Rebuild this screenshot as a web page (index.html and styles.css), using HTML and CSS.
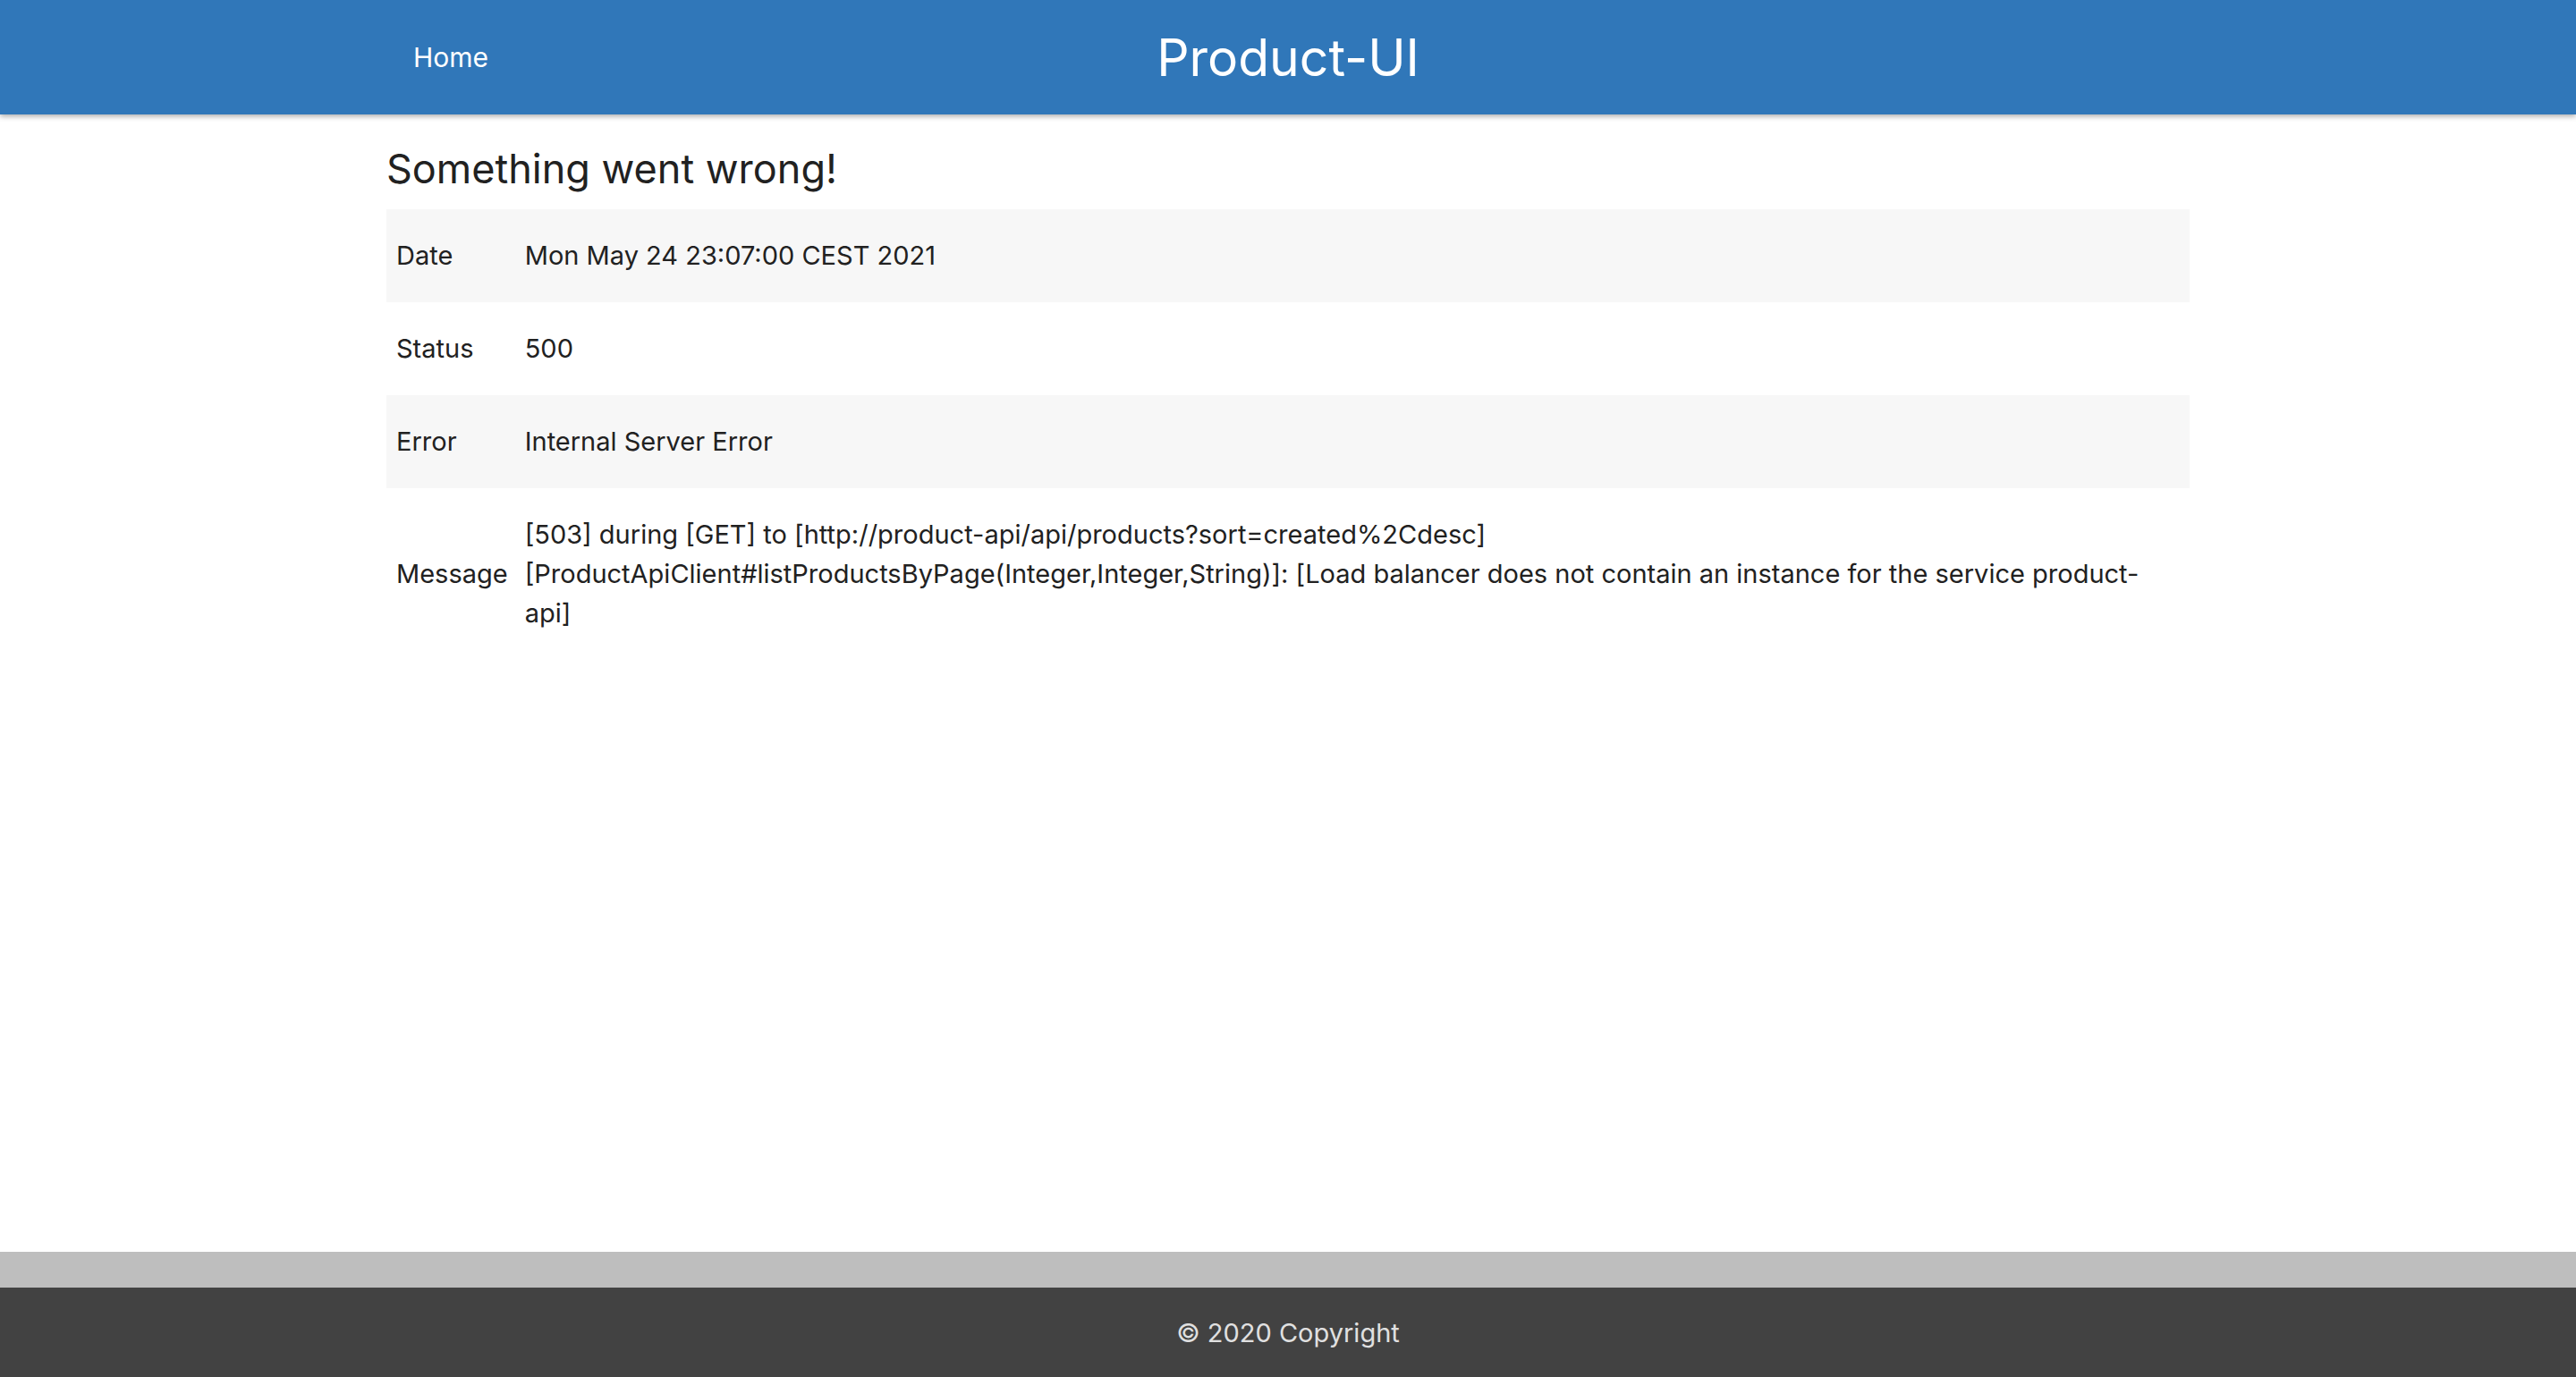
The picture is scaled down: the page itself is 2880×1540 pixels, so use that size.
FILE: index.html
```html
<!DOCTYPE html>
<html lang="en">
<head>
<meta charset="utf-8">
<title>Product-UI</title>
<link rel="stylesheet" href="styles.css">
</head>
<body>
<div class="page">
  <header class="navbar">
    <div class="navbar-inner">
      <a class="nav-link" href="#">Home</a>
      <div class="brand">Product-UI</div>
      <div class="nav-spacer"></div>
    </div>
  </header>
  <main class="content">
    <h2 class="title">Something went wrong!</h2>
    <table class="error-table">
      <tbody>
        <tr class="striped">
          <th>Date</th>
          <td>Mon May 24 23:07:00 CEST 2021</td>
        </tr>
        <tr>
          <th>Status</th>
          <td>500</td>
        </tr>
        <tr class="striped">
          <th>Error</th>
          <td>Internal Server Error</td>
        </tr>
        <tr>
          <th>Message</th>
          <td>[503] during [GET] to [http://product-api/api/products?sort=created%2Cdesc]<br>[ProductApiClient#listProductsByPage(Integer,Integer,String)]: [Load balancer does not contain an instance for the service product-<br>api]</td>
        </tr>
      </tbody>
    </table>
  </main>
  <div class="footer-band"></div>
  <footer class="footer">© 2020 Copyright</footer>
</div>
</body>
</html>
```
FILE: styles.css
```css
* { box-sizing: border-box; }
html, body { margin: 0; padding: 0; }
body {
  font-family: Inter, "Liberation Sans", Arial, sans-serif;
  color: #212121;
  background: #ffffff;
}
.page {
  min-height: 100vh;
  display: flex;
  flex-direction: column;
}
.navbar {
  height: 128px;
  background: #3077b9;
  box-shadow: 0 2px 6px rgba(0, 0, 0, 0.35);
  position: relative;
  z-index: 1;
}
.navbar-inner {
  width: 2016px;
  height: 100%;
  margin: 0 auto;
  display: grid;
  grid-template-columns: 1fr auto 1fr;
  align-items: center;
}
.nav-link {
  color: #ffffff;
  text-decoration: none;
  font-size: 30px;
  padding-left: 30px;
  justify-self: start;
}
.brand {
  color: #ffffff;
  font-size: 57px;
  line-height: 1;
}
.content {
  flex: 1;
  width: 2016px;
  margin: 0 auto;
}
.title {
  font-size: 45px;
  font-weight: 400;
  line-height: 58px;
  margin: 32px 0 16px;
}
.error-table {
  width: 100%;
  border-collapse: collapse;
  font-size: 29px;
  line-height: 44px;
}
.error-table th,
.error-table td {
  padding: 30px 11px;
  text-align: left;
  vertical-align: middle;
  font-weight: 400;
}
.error-table th {
  width: 140px;
  padding-right: 8px;
  white-space: nowrap;
}
.striped { background: #f7f7f7; }
.footer-band {
  height: 40px;
  background: #bebebe;
}
.footer {
  height: 100px;
  background: #424242;
  color: #e0e0e0;
  font-size: 29px;
  display: flex;
  align-items: center;
  justify-content: center;
}
```
